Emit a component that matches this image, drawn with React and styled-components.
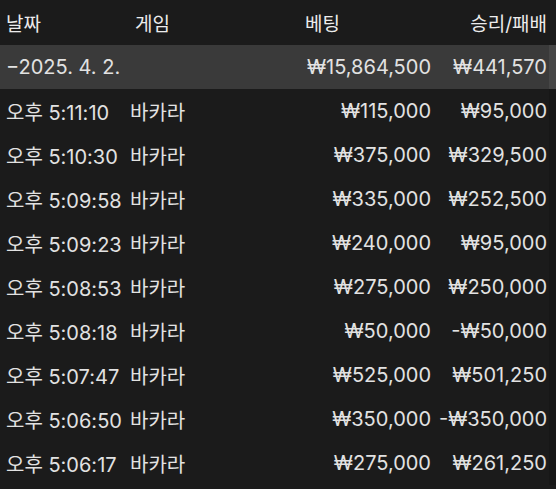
import styled, { createGlobalStyle } from "styled-components";

const GlobalStyle = createGlobalStyle`
  html, body {
    margin: 0;
    padding: 0;
    background: #1b1b1b;
  }
  body {
    font-family: Inter, "Noto Sans CJK KR", sans-serif;
    -webkit-font-smoothing: antialiased;
  }
`;

const Table = styled.div`
  width: 556px;
  height: 489px;
  overflow: hidden;
  background: #1b1b1b;
  color: #e2e2e2;
  font-size: 20px;
`;

const Row = styled.div`
  display: grid;
  grid-template-columns: 128px 1fr 171px 116px 9px;
  align-items: center;
  height: ${p => p.$height || 44}px;
  background: ${p => (p.$summary ? "#3a3a3a" : "transparent")};
`;

const Cell = styled.div`
  white-space: nowrap;
  text-align: ${p => p.$align || "left"};
  padding-left: ${p => p.$pl || 0}px;
`;

const HeaderCell = styled(Cell)`
  color: #ececec;
  font-size: 19px;
`;

const Track = styled.div`
  align-self: stretch;
  margin-left: 2px;
  background: ${p => (p.$summary ? "#464646" : p.$header ? "transparent" : "#171717")};
`;

const rows = [
  ["오후 5:11:10", "₩115,000", "₩95,000"],
  ["오후 5:10:30", "₩375,000", "₩329,500"],
  ["오후 5:09:58", "₩335,000", "₩252,500"],
  ["오후 5:09:23", "₩240,000", "₩95,000"],
  ["오후 5:08:53", "₩275,000", "₩250,000"],
  ["오후 5:08:18", "₩50,000", "-₩50,000"],
  ["오후 5:07:47", "₩525,000", "₩501,250"],
  ["오후 5:06:50", "₩350,000", "-₩350,000"],
  ["오후 5:06:17", "₩275,000", "₩261,250"],
];

export default function App() {
  return (
    <>
      <GlobalStyle />
      <Table>
        <Row $height={45}>
          <HeaderCell $pl={6}>날짜</HeaderCell>
          <HeaderCell $pl={7}>게임</HeaderCell>
          <HeaderCell $pl={45}>베팅</HeaderCell>
          <HeaderCell $align="right">승리/패배</HeaderCell>
          <Track $header />
        </Row>
        <Row $summary>
          <Cell $pl={6}>−2025. 4. 2.</Cell>
          <Cell />
          <Cell $align="right">₩15,864,500</Cell>
          <Cell $align="right">₩441,570</Cell>
          <Track $summary />
        </Row>
        {rows.map(([time, bet, win]) => (
          <Row key={time}>
            <Cell $pl={6}>{time}</Cell>
            <Cell $pl={2}>바카라</Cell>
            <Cell $align="right">{bet}</Cell>
            <Cell $align="right">{win}</Cell>
            <Track />
          </Row>
        ))}
      </Table>
    </>
  );
}
